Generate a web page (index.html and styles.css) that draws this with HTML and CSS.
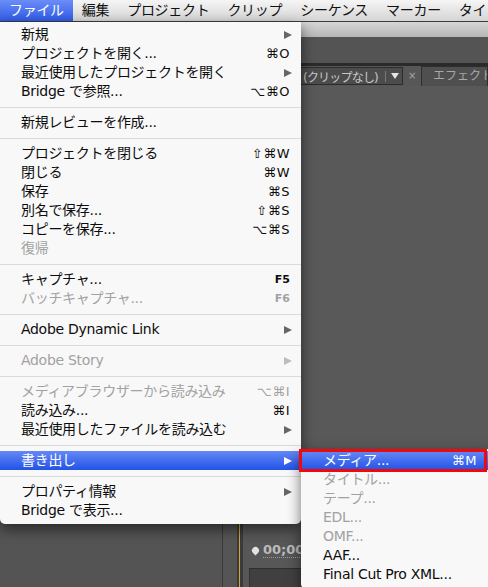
FILE: index.html
```html
<!DOCTYPE html>
<html lang="ja">
<head>
<meta charset="utf-8">
<title>ファイル メニュー</title>
<link rel="stylesheet" href="styles.css">
</head>
<body>
<div class="screen">
  <div class="menubar">
    <span class="mb-item active">ファイル</span>
    <span class="mb-item">編集</span>
    <span class="mb-item">プロジェクト</span>
    <span class="mb-item">クリップ</span>
    <span class="mb-item">シーケンス</span>
    <span class="mb-item">マーカー</span>
    <span class="mb-item">タイトル</span>
  </div>

  <div class="app">
    <div class="titlebar"></div>
    <div class="panel-head"></div>
    <div class="panel-divider"></div>
    <div class="tabrow">
      <div class="clip-select">
        <span class="clip-label">(クリップなし)</span>
        <span class="sel-sep"></span>
        <span class="sel-arrow"></span>
      </div>
      <span class="tab-close">×</span>
      <div class="tab">エフェクトコントロール</div>
    </div>
    <div class="workspace"></div>
    <div class="timeline">
      <div class="tl-left"></div>
      <div class="tl-gap"></div>
      <div class="tl-playhead"></div>
      <div class="tl-right">
        <div class="timecode"><span class="tc-dot"></span><span class="tc-text">00;00</span></div>
        <div class="tl-box"></div>
      </div>
    </div>
  </div>

  <div class="menu file-menu">
    <div class="mi"><span>新規</span><span class="arrow"></span></div>
    <div class="mi"><span>プロジェクトを開く...</span><span class="sc">⌘O</span></div>
    <div class="mi"><span>最近使用したプロジェクトを開く</span><span class="arrow"></span></div>
    <div class="mi"><span>Bridge で参照...</span><span class="sc">⌥⌘O</span></div>
    <div class="sep"></div>
    <div class="mi"><span>新規レビューを作成...</span></div>
    <div class="sep"></div>
    <div class="mi"><span>プロジェクトを閉じる</span><span class="sc">⇧⌘W</span></div>
    <div class="mi"><span>閉じる</span><span class="sc">⌘W</span></div>
    <div class="mi"><span>保存</span><span class="sc">⌘S</span></div>
    <div class="mi"><span>別名で保存...</span><span class="sc">⇧⌘S</span></div>
    <div class="mi"><span>コピーを保存...</span><span class="sc">⌥⌘S</span></div>
    <div class="mi dis"><span>復帰</span></div>
    <div class="sep"></div>
    <div class="mi"><span>キャプチャ...</span><span class="fkey">F5</span></div>
    <div class="mi dis"><span>バッチキャプチャ...</span><span class="fkey">F6</span></div>
    <div class="sep"></div>
    <div class="mi"><span>Adobe Dynamic Link</span><span class="arrow"></span></div>
    <div class="sep"></div>
    <div class="mi dis"><span>Adobe Story</span><span class="arrow"></span></div>
    <div class="sep"></div>
    <div class="mi dis"><span>メディアブラウザーから読み込み</span><span class="sc">⌥⌘I</span></div>
    <div class="mi"><span>読み込み...</span><span class="sc">⌘I</span></div>
    <div class="mi"><span>最近使用したファイルを読み込む</span><span class="arrow"></span></div>
    <div class="sep"></div>
    <div class="mi hl"><span>書き出し</span><span class="arrow"></span></div>
    <div class="sep"></div>
    <div class="mi"><span>プロパティ情報</span><span class="arrow"></span></div>
    <div class="mi"><span>Bridge で表示...</span></div>
  </div>

  <div class="menu sub-menu">
    <div class="mi hl"><span>メディア...</span><span class="sc">⌘M</span></div>
    <div class="mi dis"><span>タイトル...</span></div>
    <div class="mi dis"><span>テープ...</span></div>
    <div class="mi dis"><span>EDL...</span></div>
    <div class="mi dis"><span>OMF...</span></div>
    <div class="mi"><span>AAF...</span></div>
    <div class="mi"><span>Final Cut Pro XML...</span></div>
  </div>

  <div class="focus-ring"></div>
</div>
</body>
</html>
```

FILE: styles.css
```css
* { box-sizing: border-box; }

html, body {
  margin: 0;
  padding: 0;
  background: #595959;
}

body {
  font-family: "DejaVu Sans", "Noto Sans CJK JP", sans-serif;
}

.screen {
  position: relative;
  width: 488px;
  height: 587px;
  overflow: hidden;
  background: #595959;
}

/* ---------- menu bar ---------- */
.menubar {
  display: flex;
  height: 22px;
  border-bottom: 1px solid #3c3c3c;
  background: linear-gradient(#f5f5f5, #d5d5d5);
  font-size: 14px;
  line-height: 21px;
  color: #111;
  letter-spacing: -0.3px;
  white-space: nowrap;
  overflow: hidden;
}

.mb-item {
  padding: 0 9px;
  flex: none;
}

.mb-item.active {
  background: linear-gradient(#6b8df6, #2f5be9);
  color: #fff;
}

/* ---------- application background ---------- */
.app {
  display: flex;
  flex-direction: column;
  height: 565px;
}

.titlebar {
  height: 15px;
  background: linear-gradient(#d6d6d6, #b6b6b6);
}

.panel-head {
  height: 26px;
  background: #545454;
}

.panel-divider {
  height: 3px;
  background: #2a2a2a;
}

.tabrow {
  height: 20px;
  display: flex;
  align-items: center;
  background: #575757;
  overflow: hidden;
}

.clip-select {
  margin-left: 230px;
  width: 173px;
  height: 18px;
  flex: none;
  display: flex;
  align-items: center;
  padding-left: 72px;
  background: #4c4c4c;
  border: 1px solid #2c2c2c;
  color: #c8c8c8;
  font-size: 12px;
  letter-spacing: -0.8px;
  white-space: nowrap;
}

.sel-sep {
  width: 1px;
  height: 11px;
  margin-left: 7px;
  background: #7a7a7a;
}

.sel-arrow {
  width: 0;
  height: 0;
  margin-left: 5px;
  border-top: 6px solid #e6e6e6;
  border-left: 4px solid transparent;
  border-right: 4px solid transparent;
}

.tab-close {
  margin-left: 5px;
  width: 8px;
  flex: none;
  color: #a8a8a8;
  font-size: 10px;
  line-height: 10px;
}

.tab {
  margin-left: 5px;
  height: 20px;
  flex: 1;
  padding-left: 11px;
  background: #4f4f4f;
  border: 1px solid #2e2e2e;
  border-bottom: none;
  color: #a9a9a9;
  font-size: 12px;
  line-height: 18px;
  white-space: nowrap;
  overflow: hidden;
}

.workspace {
  flex: 1;
  background: #595959;
}

.timeline {
  height: 90px;
  display: flex;
  background: #555;
}

.tl-left {
  width: 223px;
  background: #545454;
  border-right: 1px solid #3a3a3a;
}

.tl-gap {
  width: 14px;
  background: #555;
}

.tl-playhead {
  width: 6px;
  background: linear-gradient(to right, #3b3b3b 0 2px, #d0a640 2px 3.5px, #3b3b3b 3.5px);
}

.tl-right {
  flex: 1;
  padding-left: 6px;
  padding-top: 45px;
  background: #575757;
}

.timecode {
  height: 16px;
  display: flex;
  align-items: center;
  padding-left: 3px;
}

.tc-dot {
  width: 7px;
  height: 7px;
  border-radius: 50% 50% 50% 0;
  transform: rotate(-45deg);
  background: #e2e2e2;
}

.tc-text {
  margin-left: 4px;
  color: #bcbcbc;
  font-size: 13px;
  font-weight: bold;
  line-height: 14px;
  border-bottom: 1px dotted #9a9a9a;
}

.tl-box {
  margin-top: 10px;
  height: 20px;
  background: #404040;
  border-top: 1px solid #2f2f2f;
  border-left: 1px solid #333;
}

/* ---------- menus ---------- */
.menu {
  position: absolute;
  background: #f8f8f8;
  box-shadow: 0 5px 14px rgba(0, 0, 0, 0.55);
  font-size: 14px;
  color: #0c0c0c;
  letter-spacing: -0.3px;
}

.file-menu {
  left: 0;
  top: 22px;
  width: 301px;
  padding: 3px 0 4px;
  border-radius: 0 0 5px 5px;
}

.sub-menu {
  left: 301px;
  top: 449px;
  width: 190px;
  padding: 2px 0 5px;
  border-radius: 0 0 5px 5px;
}

.mi {
  display: flex;
  align-items: center;
  justify-content: space-between;
  height: 19px;
  line-height: 19px;
  padding: 0 11px 0 21px;
  white-space: nowrap;
}

.sub-menu .mi {
  padding: 0 14px 0 22px;
}

.mi.dis {
  color: #a2a2a2;
}

.mi.hl {
  background: linear-gradient(#6588f6, #2253e7);
  color: #fff;
}

.sc {
  font-size: 13px;
  letter-spacing: 0.5px;
}

.fkey {
  font-size: 11px;
  font-weight: bold;
  letter-spacing: 0;
}

.arrow {
  width: 0;
  height: 0;
  margin-right: -2px;
  border-left: 8px solid #666;
  border-top: 4.5px solid transparent;
  border-bottom: 4.5px solid transparent;
}

.dis .arrow {
  border-left-color: #bdbdbd;
}

.hl .arrow {
  border-left-color: #fff;
}

.sep {
  height: 1px;
  margin: 6px 0 5px;
  background: #dadada;
}

.focus-ring {
  position: absolute;
  left: 299px;
  top: 449px;
  width: 188px;
  height: 23px;
  border: 3px solid #f2070b;
}
```
